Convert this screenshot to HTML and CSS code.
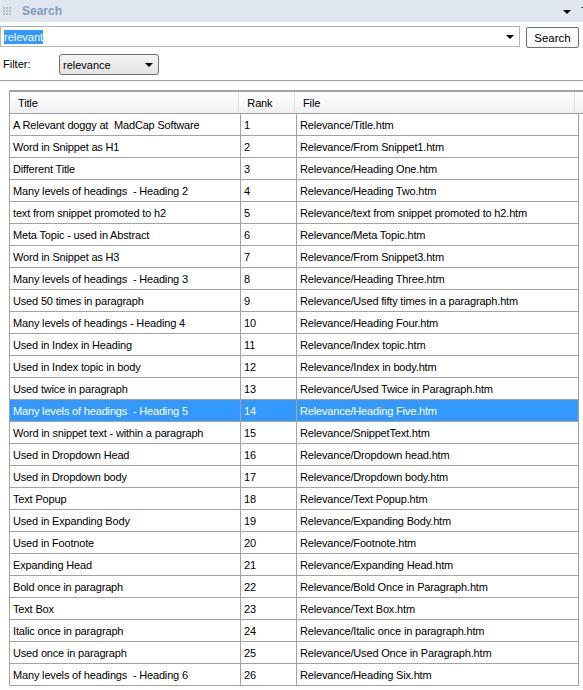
FILE: index.html
```html
<!DOCTYPE html>
<html>
<head>
<meta charset="utf-8">
<link rel="stylesheet" href="styles.css">
</head>
<body>
<div class="titlebar">
  <div class="grip">
    <span></span><span></span><span></span>
    <span></span><span></span><span></span>
    <span></span><span></span><span></span>
  </div>
  <div class="title">Search</div>
  <div class="spacer"></div>
  <div class="tb-arrow"></div>
  <div class="tb-edge"></div>
</div>
<div class="searchrow">
  <div class="combo">
    <span class="sel">relevant</span>
    <div class="spacer"></div>
    <div class="arrow"></div>
  </div>
  <div class="button">Search</div>
</div>
<div class="filterrow">
  <div class="label">Filter:</div>
  <div class="select">
    <span>relevance</span>
    <div class="spacer"></div>
    <div class="arrow"></div>
  </div>
</div>
<div class="sep"></div>
<div class="grid">
  <div class="head">
    <div class="hc c1">Title</div>
    <div class="hc c2">Rank</div>
    <div class="hc c3">File</div>
    <div class="hc c4"></div>
  </div>
  <div id="rows"></div>
</div>
<script src="script.js"></script>
</body>
</html>
```
FILE: script.js
```js
const data = [
["A Relevant doggy at  MadCap Software","Relevance/Title.htm"],
["Word in Snippet as H1","Relevance/From Snippet1.htm"],
["Different Title","Relevance/Heading One.htm"],
["Many levels of headings  - Heading 2","Relevance/Heading Two.htm"],
["text from snippet promoted to h2","Relevance/text from snippet promoted to h2.htm"],
["Meta Topic - used in Abstract","Relevance/Meta Topic.htm"],
["Word in Snippet as H3","Relevance/From Snippet3.htm"],
["Many levels of headings  - Heading 3","Relevance/Heading Three.htm"],
["Used 50 times in paragraph","Relevance/Used fifty times in a paragraph.htm"],
["Many levels of headings - Heading 4","Relevance/Heading Four.htm"],
["Used in Index in Heading","Relevance/Index topic.htm"],
["Used in Index topic in body","Relevance/Index in body.htm"],
["Used twice in paragraph","Relevance/Used Twice in Paragraph.htm"],
["Many levels of headings  - Heading 5","Relevance/Heading Five.htm"],
["Word in snippet text - within a paragraph","Relevance/SnippetText.htm"],
["Used in Dropdown Head","Relevance/Dropdown head.htm"],
["Used in Dropdown body","Relevance/Dropdown body.htm"],
["Text Popup","Relevance/Text Popup.htm"],
["Used in Expanding Body","Relevance/Expanding Body.htm"],
["Used in Footnote","Relevance/Footnote.htm"],
["Expanding Head","Relevance/Expanding Head.htm"],
["Bold once in paragraph","Relevance/Bold Once in Paragraph.htm"],
["Text Box","Relevance/Text Box.htm"],
["Italic once in paragraph","Relevance/Italic once in paragraph.htm"],
["Used once in paragraph","Relevance/Used Once in Paragraph.htm"],
["Many levels of headings  - Heading 6","Relevance/Heading Six.htm"]
];
const rows = document.getElementById("rows");
data.forEach((d, i) => {
  const r = document.createElement("div");
  r.className = "row" + (i === 13 ? " selected" : "");
  const vals = [d[0], String(i + 1), d[1]];
  vals.forEach((v, j) => {
    const c = document.createElement("div");
    c.className = "cell c" + (j + 1);
    c.textContent = v;
    r.appendChild(c);
  });
  rows.appendChild(r);
});
```
FILE: styles.css
```css
html, body {
  margin: 0;
  padding: 0;
  background: #ffffff;
  font-family: "Liberation Sans", Arial, sans-serif;
  font-size: 11px;
  color: #000;
  overflow: hidden;
}
.spacer { flex: 1; }
.titlebar {
  height: 22px;
  background: #dfe6ef;
  display: flex;
  align-items: center;
}
.grip {
  display: grid;
  grid-template-columns: repeat(3, 2px);
  grid-template-rows: repeat(3, 2px);
  gap: 1px;
  margin-left: 3px;
  margin-right: 11px;
}
.grip span { background: #b9bec6; }
.title {
  font-weight: bold;
  font-size: 12px;
  color: #7f9ac0;
}
.tb-arrow {
  width: 0; height: 0;
  border-left: 4px solid transparent;
  border-right: 4px solid transparent;
  border-top: 4px solid #000;
  margin-right: 10px;
  margin-top: 2px;
}
.tb-edge {
  width: 2px; height: 8px;
  border-top: 1px solid #555;
}
.searchrow {
  display: flex;
  margin-top: 4px;
  height: 21px;
}
.combo {
  width: 520px;
  box-sizing: border-box;
  border: 1px solid #b5b8be;
  border-top-color: #abadb3;
  display: flex;
  align-items: center;
  padding-left: 3px;
}
.sel {
  background: #3399ff;
  color: #fff;
  padding: 1px 0;
}
.arrow {
  width: 0; height: 0;
  border-left: 4px solid transparent;
  border-right: 4px solid transparent;
  border-top: 4px solid #000;
  margin-right: 5px;
}
.button {
  margin-left: 6px;
  width: 53px;
  box-sizing: border-box;
  height: 21px;
  margin-top: 1px;
  border: 1px solid #707070;
  border-radius: 2px;
  background: #fbfbfb;
  display: flex;
  align-items: center;
  justify-content: center;
  font-size: 11.5px;
}
.filterrow {
  display: flex;
  align-items: center;
  margin-top: 7px;
  height: 21px;
}
.label {
  width: 59px;
  padding-left: 3px;
  box-sizing: border-box;
  padding-bottom: 1px;
}
.select {
  width: 100px;
  height: 21px;
  box-sizing: border-box;
  border: 1px solid #707070;
  border-radius: 3px;
  background: linear-gradient(#f4f4f4, #e3e3e3);
  display: flex;
  align-items: center;
  padding-left: 3px;
}
.sep {
  margin-top: 5px;
  height: 1px;
  background: #a0a0a0;
  border-bottom: 1px solid #f4f4f4;
}
.grid {
  margin-top: 8px;
  margin-left: 9px;
  border-top: 2px solid #a3a3a3;
  border-left: 1px solid #a3a3a3;
}
.head {
  display: flex;
  height: 22px;
  box-sizing: border-box;
  background: linear-gradient(#ffffff 0%, #f7f8f9 50%, #eeeff1 100%);
  border-bottom: 1px solid #a3a3a3;
}
.hc {
  box-sizing: border-box;
  padding-left: 8px;
  display: flex;
  align-items: center;
  border-right: 1px solid #e3e4e6;
  letter-spacing: -0.15px;
}
.hc.c4 { flex: 1; border-right: none; }
.c1 { width: 231px; }
.c2 { width: 56px; }
.c3 { width: 282px; }
.row {
  display: flex;
  height: 22px;
}
.cell {
  box-sizing: border-box;
  height: 22px;
  border-right: 1px solid #a3a3a3;
  border-bottom: 1px solid #a3a3a3;
  padding-left: 3px;
  display: flex;
  align-items: center;
  white-space: pre;
  overflow: hidden;
  letter-spacing: -0.17px;
}
.row.selected .cell {
  background: #3399ff;
  color: #fff;
}
```
